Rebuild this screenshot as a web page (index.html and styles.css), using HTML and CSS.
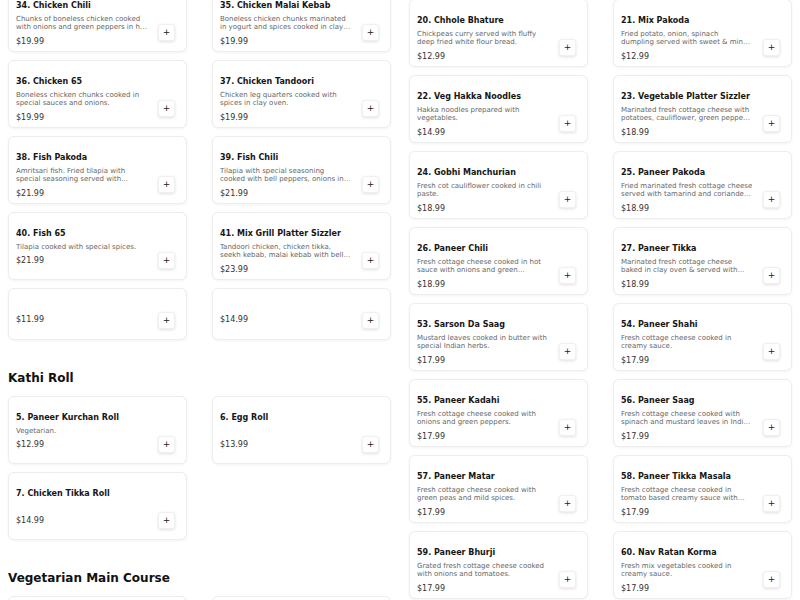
FILE: index.html
```html
<!doctype html>
<html>
<head>
    <meta charset="utf-8" />
    <title>Menu</title>
    <link rel="stylesheet" href="styles.css">
</head>
<body>
<div class="menu">
    <div class="column left">
        <div class="section">
            <div class="grid">
                <div class="card">
                    <div class="info">
                        <p class="name">34. Chicken Chili</p>
                        <p class="desc">Chunks of boneless chicken cooked with onions and green peppers in hot sauce.</p>
                        <p class="price">$19.99</p>
                    </div>
                    <button class="add">+</button>
                </div>
                <div class="card">
                    <div class="info">
                        <p class="name">35. Chicken Malai Kebab</p>
                        <p class="desc">Boneless chicken chunks marinated in yogurt and spices cooked in clay oven.</p>
                        <p class="price">$19.99</p>
                    </div>
                    <button class="add">+</button>
                </div>
                <div class="card">
                    <div class="info">
                        <p class="name">36. Chicken 65</p>
                        <p class="desc">Boneless chicken chunks cooked in special sauces and onions.</p>
                        <p class="price">$19.99</p>
                    </div>
                    <button class="add">+</button>
                </div>
                <div class="card">
                    <div class="info">
                        <p class="name">37. Chicken Tandoori</p>
                        <p class="desc">Chicken leg quarters cooked with spices in clay oven.</p>
                        <p class="price">$19.99</p>
                    </div>
                    <button class="add">+</button>
                </div>
                <div class="card">
                    <div class="info">
                        <p class="name">38. Fish Pakoda</p>
                        <p class="desc">Amritsari fish. Fried tilapia with special seasoning served with chutney.</p>
                        <p class="price">$21.99</p>
                    </div>
                    <button class="add">+</button>
                </div>
                <div class="card">
                    <div class="info">
                        <p class="name">39. Fish Chili</p>
                        <p class="desc">Tilapia with special seasoning cooked with bell peppers, onions in hot sauce.</p>
                        <p class="price">$21.99</p>
                    </div>
                    <button class="add">+</button>
                </div>
                <div class="card">
                    <div class="info">
                        <p class="name">40. Fish 65</p>
                        <p class="desc">Tilapia cooked with special spices.</p>
                        <p class="price">$21.99</p>
                    </div>
                    <button class="add">+</button>
                </div>
                <div class="card">
                    <div class="info">
                        <p class="name">41. Mix Grill Platter Sizzler</p>
                        <p class="desc">Tandoori chicken, chicken tikka, seekh kebab, malai kebab with bell peppers and onions.</p>
                        <p class="price">$23.99</p>
                    </div>
                    <button class="add">+</button>
                </div>
                <div class="card bare">
                    <div class="info">
                        <p class="price">$11.99</p>
                    </div>
                    <button class="add">+</button>
                </div>
                <div class="card bare">
                    <div class="info">
                        <p class="price">$14.99</p>
                    </div>
                    <button class="add">+</button>
                </div>
            </div>
        </div>

        <div class="section">
            <h2>Kathi Roll</h2>
            <div class="grid">
                <div class="card">
                    <div class="info">
                        <p class="name">5. Paneer Kurchan Roll</p>
                        <p class="desc">Vegetarian.</p>
                        <p class="price">$12.99</p>
                    </div>
                    <button class="add">+</button>
                </div>
                <div class="card">
                    <div class="info">
                        <p class="name">6. Egg Roll</p>
                        <p class="desc"></p>
                        <p class="price">$13.99</p>
                    </div>
                    <button class="add">+</button>
                </div>
                <div class="card">
                    <div class="info">
                        <p class="name">7. Chicken Tikka Roll</p>
                        <p class="desc"></p>
                        <p class="price">$14.99</p>
                    </div>
                    <button class="add">+</button>
                </div>
            </div>
        </div>

        <div class="section">
            <h2>Vegetarian Main Course</h2>
            <div class="grid">
                <div class="card">
                    <div class="info">
                        <p class="name">50. Dal Makhani</p>
                        <p class="desc">Black lentils cooked with butter and cream.</p>
                        <p class="price">$15.99</p>
                    </div>
                    <button class="add">+</button>
                </div>
                <div class="card">
                    <div class="info">
                        <p class="name">51. Dal Tadka</p>
                        <p class="desc">Yellow lentils tempered with cumin and garlic.</p>
                        <p class="price">$15.99</p>
                    </div>
                    <button class="add">+</button>
                </div>
            </div>
        </div>
    </div>

    <div class="column right">
        <div class="grid">
            <div class="card">
                <div class="info">
                    <p class="name">20. Chhole Bhature</p>
                    <p class="desc">Chickpeas curry served with fluffy deep fried white flour bread.</p>
                    <p class="price">$12.99</p>
                </div>
                <button class="add">+</button>
            </div>
            <div class="card">
                <div class="info">
                    <p class="name">21. Mix Pakoda</p>
                    <p class="desc">Fried potato, onion, spinach dumpling served with sweet &amp; mint chutney.</p>
                    <p class="price">$12.99</p>
                </div>
                <button class="add">+</button>
            </div>
            <div class="card">
                <div class="info">
                    <p class="name">22. Veg Hakka Noodles</p>
                    <p class="desc">Hakka noodles prepared with vegetables.</p>
                    <p class="price">$14.99</p>
                </div>
                <button class="add">+</button>
            </div>
            <div class="card">
                <div class="info">
                    <p class="name">23. Vegetable Platter Sizzler</p>
                    <p class="desc">Marinated fresh cottage cheese with potatoes, cauliflower, green peppers and onions.</p>
                    <p class="price">$18.99</p>
                </div>
                <button class="add">+</button>
            </div>
            <div class="card">
                <div class="info">
                    <p class="name">24. Gobhi Manchurian</p>
                    <p class="desc">Fresh cot cauliflower cooked in chili paste.</p>
                    <p class="price">$18.99</p>
                </div>
                <button class="add">+</button>
            </div>
            <div class="card">
                <div class="info">
                    <p class="name">25. Paneer Pakoda</p>
                    <p class="desc">Fried marinated fresh cottage cheese served with tamarind and coriander chutney.</p>
                    <p class="price">$18.99</p>
                </div>
                <button class="add">+</button>
            </div>
            <div class="card">
                <div class="info">
                    <p class="name">26. Paneer Chili</p>
                    <p class="desc">Fresh cottage cheese cooked in hot sauce with onions and green peppers.</p>
                    <p class="price">$18.99</p>
                </div>
                <button class="add">+</button>
            </div>
            <div class="card">
                <div class="info">
                    <p class="name">27. Paneer Tikka</p>
                    <p class="desc">Marinated fresh cottage cheese baked in clay oven &amp; served with onions.</p>
                    <p class="price">$18.99</p>
                </div>
                <button class="add">+</button>
            </div>
            <div class="card">
                <div class="info">
                    <p class="name">53. Sarson Da Saag</p>
                    <p class="desc">Mustard leaves cooked in butter with special Indian herbs.</p>
                    <p class="price">$17.99</p>
                </div>
                <button class="add">+</button>
            </div>
            <div class="card">
                <div class="info">
                    <p class="name">54. Paneer Shahi</p>
                    <p class="desc">Fresh cottage cheese cooked in creamy sauce.</p>
                    <p class="price">$17.99</p>
                </div>
                <button class="add">+</button>
            </div>
            <div class="card">
                <div class="info">
                    <p class="name">55. Paneer Kadahi</p>
                    <p class="desc">Fresh cottage cheese cooked with onions and green peppers.</p>
                    <p class="price">$17.99</p>
                </div>
                <button class="add">+</button>
            </div>
            <div class="card">
                <div class="info">
                    <p class="name">56. Paneer Saag</p>
                    <p class="desc">Fresh cottage cheese cooked with spinach and mustard leaves in Indian spices.</p>
                    <p class="price">$17.99</p>
                </div>
                <button class="add">+</button>
            </div>
            <div class="card">
                <div class="info">
                    <p class="name">57. Paneer Matar</p>
                    <p class="desc">Fresh cottage cheese cooked with green peas and mild spices.</p>
                    <p class="price">$17.99</p>
                </div>
                <button class="add">+</button>
            </div>
            <div class="card">
                <div class="info">
                    <p class="name">58. Paneer Tikka Masala</p>
                    <p class="desc">Fresh cottage cheese cooked in tomato based creamy sauce with butter.</p>
                    <p class="price">$17.99</p>
                </div>
                <button class="add">+</button>
            </div>
            <div class="card">
                <div class="info">
                    <p class="name">59. Paneer Bhurji</p>
                    <p class="desc">Grated fresh cottage cheese cooked with onions and tomatoes.</p>
                    <p class="price">$17.99</p>
                </div>
                <button class="add">+</button>
            </div>
            <div class="card">
                <div class="info">
                    <p class="name">60. Nav Ratan Korma</p>
                    <p class="desc">Fresh mix vegetables cooked in creamy sauce.</p>
                    <p class="price">$17.99</p>
                </div>
                <button class="add">+</button>
            </div>
        </div>
    </div>
</div>
</body>
</html>
```

FILE: styles.css
```css
*{
    margin:0px;
    padding:0px;
    box-sizing:border-box;
}
html,body{
    width:100%;
    height:100%;
    overflow:hidden;
    background-color:#fff;
    font-family:"DejaVu Sans","Liberation Sans",sans-serif;
}
.menu{
    display:grid;
    grid-template-columns:383px 383px;
    column-gap:18px;
    align-items:start;
    padding:0px 8px;
}
/* page is scrolled: both columns start above the window */
.column.left{
    margin-top:-16px;
}
.column.right{
    margin-top:-1px;
}
.section + .section{
    margin-top:30px;
}
.section h2{
    font-size:12px;
    line-height:16px;
    font-weight:bold;
    color:#111;
    margin-bottom:10px;
}
.grid{
    display:grid;
    grid-template-columns:1fr 1fr;
    gap:8px 25px;
}
.card{
    height:68px;
    display:flex;
    gap:10.75px;
    padding:16px 11px 10px 7px;
    background-color:#fff;
    border:1px solid #ededed;
    border-radius:6px;
    box-shadow:0px 1px 3px rgba(0,0,0,.05);
    overflow:hidden;
}
.card.bare{
    height:52px;
}
.card .info{
    flex:1;
    min-width:0;
}
.card .name{
    font-size:8px;
    line-height:10px;
    font-weight:bold;
    color:#161616;
    white-space:nowrap;
    margin-bottom:4px;
}
.card .desc{
    font-size:7px;
    line-height:8.4px;
    min-height:8.4px;
    color:#666;
    display:-webkit-box;
    -webkit-line-clamp:2;
    -webkit-box-orient:vertical;
    overflow:hidden;
    margin-bottom:5px;
}
.card .price{
    font-size:8px;
    line-height:10px;
    color:#333;
}
.card.bare .price{
    margin-top:10px;
}
.card .add{
    align-self:flex-end;
    flex:none;
    width:17px;
    height:17px;
    border:1px solid #f0f0f0;
    border-radius:3px;
    background-color:#fff;
    box-shadow:0px 1px 3px rgba(0,0,0,.12);
    font-family:"DejaVu Sans",sans-serif;
    font-size:9px;
    line-height:15px;
    color:#222;
    text-align:center;
    cursor:pointer;
}
```
